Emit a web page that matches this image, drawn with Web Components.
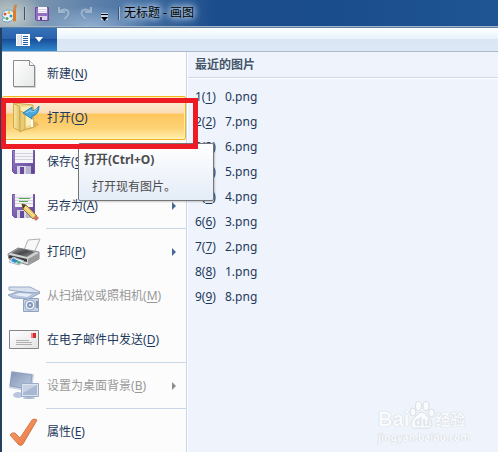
<!DOCTYPE html>
<html lang="zh-CN">
<head>
<meta charset="utf-8">
<title>无标题 - 画图</title>
<style>
	html, body {
		margin: 0;
		height: 100%;
		overflow: hidden;
	}

	body {
		font: 12px/20px "Noto Sans", "Noto Sans CJK SC", sans-serif;
		color: #1e395b;
	}
</style>
</head>
<body>
<paint-window>
	<title-bar slot="title">无标题 - 画图</title-bar>
	<ribbon-tabs slot="ribbon"></ribbon-tabs>
	<menu-item slot="menu" icon="new" key="N">新建</menu-item>
	<menu-item slot="menu" icon="open" key="O" active>打开</menu-item>
	<menu-item slot="menu" icon="save" key="S">保存</menu-item>
	<menu-item slot="menu" icon="saveas" key="A" more line>另存为</menu-item>
	<menu-item slot="menu" icon="print" key="P" more>打印</menu-item>
	<menu-item slot="menu" icon="scan" key="M" disabled>从扫描仪或照相机</menu-item>
	<menu-item slot="menu" icon="mail" key="D" line>在电子邮件中发送</menu-item>
	<menu-item slot="menu" icon="desktop" key="B" more disabled line>设置为桌面背景</menu-item>
	<menu-item slot="menu" icon="check" key="E">属性</menu-item>
	<recent-list slot="recent" files="0.png 7.png 6.png 5.png 4.png 3.png 2.png 1.png 8.png">最近的图片</recent-list>
	<menu-tip slot="over"><span slot="name">打开(Ctrl+O)</span>打开现有图片。</menu-tip>
	<red-mark slot="over"></red-mark>
	<site-mark slot="over"></site-mark>
</paint-window>

<script>
// 34x34 menu icons
const disk = `
	<linearGradient id="d" x2="1" y2="1"><stop stop-color="#9a7fc8"/><stop offset="1" stop-color="#5f3f99"/></linearGradient>
	<path d="M5.500 5.500h22v23h-20l-2-2z" fill="url(#d)" stroke="#7052a4"/>
	<path d="M8 5h18v13H8z" fill="#f5f5f8"/>
	<path d="M8 8.500h18M8 11.500h18M8 14.500h18" stroke="#d2d3dc"/>
	<path d="M10 21h14v8H10z" fill="#d5d6e2"/>
	<path d="M13 22h4v7h-4z" fill="#69499f"/><path d="M19 21h5v8h-5z" fill="#b5b5cb"/>`;

const icons = {
	new: `
		<linearGradient id="a" x2="1" y2="1"><stop stop-color="#fff"/><stop offset="1" stop-color="#e6e7e8"/></linearGradient>
		<path d="M7 4h15l7 6v21H7z" fill="#d4d4d4"/>
		<path d="M6.500 3.500h16l5 5v21h-21z" fill="url(#a)" stroke="#8c8c8c"/>
		<path d="M22.500 3.500v5h5" fill="#f7f7f7" stroke="#8c8c8c"/>`,
	open: `
		<linearGradient id="a" x2="1"><stop stop-color="#f8e9a4"/><stop offset="1" stop-color="#dfbd63"/></linearGradient>
		<path d="M12 31l15-4 5-3-3-4z" fill="#b78131" opacity=".35"/>
		<path d="M7 2l19 2 1 22-14 4z" fill="#f0d88a" stroke="#cfaa50"/>
		<path d="M14 6l11-1v18l-11 5z" fill="#fbeeb5"/>
		<path d="M6.500 2.500l6 3 1 25-7-4z" fill="url(#a)" stroke="#cdaa51"/>
		<path d="M13 10l5 2v16l-5 3z" fill="#e9cb75" stroke="#cda648"/>
		<path d="M25 19v7" stroke="#fff" stroke-width="2"/>
		<path d="M16 12l9-6v4q4 0 7-5 0 9-7 10v3z" fill="#49a8dc" stroke="#2b83b8"/>
		<path d="M19 12l5-3v2q4 0 6-3" fill="none" stroke="#8fd4f2"/>`,
	save: disk,
	saveas: disk + `
		<path d="M12 9.500h11M12 12.500h9" stroke="#55ac4d"/>
		<path d="M15 15l4 1 11 11-4 3-10-10z" fill="#efca6f" stroke="#99763f"/>
		<path d="M18 18l10 10" stroke="#fff0aa"/>
		<path d="M15 15l4 1-3 4z" fill="#443c38"/>
		<path d="M29 26l3 3-3 3-3-3z" fill="#c87565"/>`,
	print: `
		<linearGradient id="a" x2="1" y2="1"><stop stop-color="#a8a8a8"/><stop offset=".5" stop-color="#46484a"/><stop offset="1" stop-color="#999"/></linearGradient>
		<path d="M17 15l4-10 12-1-6 14z" fill="#f8f8f8" stroke="#b0b0b0"/>
		<path d="M1 19l10-6 21 4v7l-11 6-19-6z" fill="#cfd1d1" stroke="#858686"/>
		<path d="M4 18l8-5 16 4-8 5z" fill="url(#a)"/>
		<path d="M21 24l11-6v6l-11 5z" fill="#97999b"/>
		<path d="M2 20l18 4v3L2 23z" fill="#3a3c3d"/>
		<path d="M6 22l11 4-5 4-10-3z" fill="#f4faff" stroke="#aeb8c0"/>
		<path d="M6 23l6 3-4 2-4-2z" fill="#378ac4"/><path d="M12 26l3 1-3 2-3-1z" fill="#4ea982"/>`,
	scan: `
		<path d="M2 8h21l10 5-3 2L2 11z" fill="#d8e0ee" stroke="#97a9c6"/>
		<path d="M1 16l9-3 23 1-11 6-16-1z" fill="#b5c4dc" stroke="#93a7c6"/>
		<path d="M7 16l5-2 13 1-5 3z" fill="#e6edf7"/>
		<path d="M16.500 20.500h4l1-1h10v13h-15z" fill="#c5d1e3" stroke="#90a4c3"/>
		<circle cx="23" cy="26" r="5" fill="#eef2f8" stroke="#8ca0bf"/>
		<circle cx="23" cy="26" r="2" fill="none" stroke="#8296b8" stroke-width="2"/>
		<path d="M30 22v7" stroke="#8194b3" stroke-width="2"/>`,
	mail: `
		<linearGradient id="a" x2="1" y2="1"><stop stop-color="#fff"/><stop offset="1" stop-color="#e3e3e3"/></linearGradient>
		<path d="M2.500 7.500h29v18h-29z" fill="url(#a)" stroke="#858585"/>
		<path d="M24 10h5v5h-5z" fill="#cf2e32"/><path d="M24 10h2v5h-2z" fill="#ef8485"/>
		<path d="M9 17.500h13M9 19.500h16M9 21.500h16" stroke="#b0b0b0"/>`,
	desktop: `
		<linearGradient id="a" x2="1" y2="1"><stop stop-color="#8294b4"/><stop offset="1" stop-color="#c1cee2"/></linearGradient>
		<path d="M4 2l23 3-2 18-23-4z" fill="#c8d3e5"/>
		<path d="M5 3l20 3-2 14-20-3z" fill="url(#a)" stroke="#8d9ebd"/>
		<ellipse cx="11" cy="26" rx="5" ry="3" fill="#b9c6dc"/>
		<path d="M14.500 14.500h17v13h-17z" fill="#dce4f0" stroke="#9cacc8"/>
		<path d="M16 16h14v10H16z" fill="#a8b8d2"/><path d="M16 16h14L16 24z" fill="#c6d2e4"/>
		<ellipse cx="22" cy="29" rx="6" ry="1" fill="#a9b8d1"/>`,
	check: `
		<linearGradient id="a" x2="1" y2="1"><stop stop-color="#f8a86c"/><stop offset="1" stop-color="#e8703f"/></linearGradient>
		<path d="M3 20q2-3 5-2l5 5L25 5q2-2 5 0L16 29q-1 2-4 1z" fill="url(#a)" stroke="#d57850"/>`
};

// Frame of the window: title, ribbon, then the menu beside the recent files
class PaintWindow extends HTMLElement {
	constructor() {
		super();
		const shadow = this.attachShadow({ mode: 'open' });
		shadow.innerHTML = `
	<style>
	:host {
		display: flex;
		flex-direction: column;
		position: relative;
		min-height: 100%;
	}
	.client {
		flex: 1;
		display: flex;
		flex-direction: column;
		border-left: 2px solid #24405f;
	}
	.body {
		flex: 1;
		display: grid;
		grid-template-columns: 184px 1fr;
		background: #eff4fc;
	}
	nav {
		background: #fcfcfc;
		border-right: 1px solid #c8d6e6;
		margin-right: -1px;
	}
	main {
		margin-left: 1px;
		border-left: 1px solid #fff;
	}
	</style>
	<slot name="title"></slot>
	<div class="client">
		<slot name="ribbon"></slot>
		<div class="body">
			<nav><slot name="menu"></slot></nav>
			<main><slot name="recent"></slot></main>
		</div>
	</div>
	<slot name="over"></slot>`;
	}
}

class TitleBar extends HTMLElement {
	constructor() {
		super();
		const shadow = this.attachShadow({ mode: 'open' });
		shadow.innerHTML = `
	<style>
	:host {
		display: flex;
		align-items: center;
		height: 26px;
		border-bottom: 1px solid #a3b5c9;
		box-shadow: 0 1px #64819f;
		margin-bottom: 1px;
		background:
			radial-gradient(ellipse 34px 24px at 12px 16px, #c3cdcc, transparent),
			radial-gradient(ellipse 60px 20px at 90px 26px, #8fadcf, transparent),
			linear-gradient(90deg, #8fa0a8, #7390ae 50px, #5379a8 115px, #3a659b 160px, #1b4c8b 215px, #1a4d8c 330px, #1f5593);
	}
	button {
		padding: 0;
		border: 0;
		background: none;
		height: 20px;
	}
	svg { display: block; }
	i {
		width: 1px;
		height: 13px;
		background: #3b5269;
		border-right: 1px solid #b1c2d2;
	}
	.tools {
		display: flex;
		align-items: center;
		gap: 6px;
		margin: 0 9px;
	}
	h1 {
		font: inherit;
		margin: 0 0 0 4px;
		color: #000;
		text-shadow: 0 0 5px #a9c4df, 0 0 7px #a9c4df, 0 0 9px #a9c4df, 0 0 11px #a9c4df;
	}
	</style>
	<button aria-label="画图"><svg width="18" height="20" viewBox="0 0 18 20">
		<path d="M2 13Q2 7 8 7q6 0 6 5 0 6-6 7-6 0-6-3 1-1 3-1z" fill="#eaf4fa" stroke="#5fa3cb"/>
		<circle cx="5" cy="11" r="1.500" fill="#e0523e"/><circle cx="9" cy="9.500" r="1.500" fill="#e7b740"/>
		<circle cx="7" cy="15.500" r="1.500" fill="#4fa957"/><circle cx="11" cy="13" r="1.500" fill="#3d92cc"/>
		<path d="M14.500 8v9" stroke="#e07c22" stroke-width="3" stroke-linecap="round"/><path d="M13 7l1-5 3-1-1 6z" fill="#c98a4c"/>
	</svg></button>
	<i style="margin-left: 6px"></i>
	<div class="tools">
		<button aria-label="保存"><svg width="15" height="20" viewBox="0 0 15 20">
			<path d="M.5 4.500h13v13h-12l-1-1z" fill="#9270c4" stroke="#6d4a9f"/>
			<path d="M3 4h9v6H3z" fill="#f7f6fb"/><path d="M3 6.500h9M3 8.500h9" stroke="#dbd7e6"/>
			<path d="M3 13h9v4H3z" fill="#ddd6ea"/><path d="M5 14h2v3H5z" fill="#5c3a8d"/>
		</svg></button>
		<button aria-label="撤消"><svg width="16" height="20" viewBox="0 0 16 20" fill="none">
			<path d="M3 4v5h6M4 8q5-3 8 0 2 4-4 8" stroke="#6585ab" stroke-width="3" opacity=".5"/>
			<path d="M3 4v5h6M4 8q5-3 8 0 2 4-4 8" stroke="#a2b7ce" stroke-width="2"/>
		</svg></button>
		<button aria-label="重做"><svg width="16" height="20" viewBox="0 0 16 20" fill="none">
			<path d="M13 4v5H7M12 8q-5-3-8 0-2 4 4 8" stroke="#6585ab" stroke-width="3" opacity=".5"/>
			<path d="M13 4v5H7M12 8q-5-3-8 0-2 4 4 8" stroke="#9cb3cd" stroke-width="2"/>
		</svg></button>
		<button aria-label="自定义快速访问工具栏"><svg width="9" height="20" viewBox="0 0 9 20">
			<path d="M1 10h7v7H1z" fill="#c6d7e8"/>
			<path d="M1 11.500h7" stroke="#000"/><path d="M1 14h7l-3.500 4z"/>
		</svg></button>
	</div>
	<i></i>
	<h1><slot></slot></h1>`;
	}
}

class RibbonTabs extends HTMLElement {
	constructor() {
		super();
		const shadow = this.attachShadow({ mode: 'open' });
		shadow.innerHTML = `
	<style>
	:host {
		display: flex;
		height: 23px;
		background: linear-gradient(#fff, #e8f3fb 11px, #dae6f4 11px, #dce8f5);
		border-bottom: 1px solid #a9b8cb;
	}
	button {
		display: flex;
		align-items: center;
		gap: 5px;
		width: 55px;
		padding: 0 0 0 14px;
		border: 0;
		background: linear-gradient(#3672b7, #2a62ac 11px, #174d99 11px, #3288cd);
	}
	</style>
	<button aria-label="画图菜单">
		<svg width="14" height="12" viewBox="0 0 14 12">
			<path d="M0 0h14v12H0z" fill="#fff"/><path d="M1 1h4v10H1z" fill="#e3e8f0"/>
			<path d="M5.500 1v10" stroke="#b8c6da"/>
			<path d="M7 2.500h5M7 4.500h5M7 6.500h5M7 8.500h5M7 10.500h5" stroke="#2a62a6"/>
		</svg>
		<svg width="8" height="5" viewBox="0 0 8 5"><path d="M0 0h8L4 5z" fill="#fff"/></svg>
	</button>`;
	}
}

/**
 * A row of the application menu.
 * Attributes: icon, key (access key), more, line (rule below), active, disabled
 */
class MenuItem extends HTMLElement {
	constructor() {
		super();
		const shadow = this.attachShadow({ mode: 'open' });
		shadow.innerHTML = `
	<style>
	:host { display: block; }
	:host([line])::after {
		content: "";
		display: block;
		height: 1px;
		margin: 0 0 1px 44px;
		background: #c9d7e9;
	}
	button {
		box-sizing: border-box;
		display: flex;
		align-items: center;
		gap: 6px;
		width: 100%;
		height: 44px;
		padding: 0 9px 0 4px;
		border: 1px solid transparent;
		border-radius: 2px;
		background: none;
		font: inherit;
		color: inherit;
		text-align: left;
		white-space: nowrap;
	}
	button:disabled { color: #999; }
	:host([active]) button {
		border-color: #f3b51c;
		background: linear-gradient(#fdf0df, #fbdcb6 16px, #fdc65d 17px, #fdd377 32px, #fff0ae);
		box-shadow: inset 0 0 0 1px #fff0b8;
	}
	.label { flex: 1; }
	u { text-underline-offset: 2px; }
	svg { flex: none; }
	</style>
	<button>
		<svg class="icon" width="34" height="34" viewBox="0 0 34 34">${icons[this.getAttribute('icon')]}</svg>
		<span class="label"><slot></slot>(<u>${this.getAttribute('key')}</u>)</span>
	</button>`;

		const button = shadow.querySelector('button');
		button.disabled = this.hasAttribute('disabled');
		// Arrow of the submenu
		if (this.hasAttribute('more')) {
			button.innerHTML += `<svg width="4" height="8" viewBox="0 0 4 8"><path d="M0 0l4 4-4 4z" fill="${button.disabled ? '#8d8d8d' : '#486995'}"/></svg>`;
		}
	}
}

class RecentList extends HTMLElement {
	constructor() {
		super();
		const shadow = this.attachShadow({ mode: 'open' });
		shadow.innerHTML = `
	<style>
	:host { display: block; }
	h2 {
		margin: 0 0 6px;
		padding: 3px 7px 2px;
		font: inherit;
		font-weight: bold;
		color: #44546a;
		border-bottom: 1px solid #cdd9e7;
		box-shadow: 0 1px #fff;
	}
	ol {
		margin: 0;
		padding: 0;
		list-style: none;
	}
	button {
		display: flex;
		align-items: center;
		width: 100%;
		height: 25px;
		padding: 0 7px;
		border: 0;
		background: none;
		font: inherit;
		color: inherit;
	}
	.number {
		width: 30px;
		text-align: left;
	}
	u { text-underline-offset: 2px; }
	</style>
	<h2><slot></slot></h2>
	<ol></ol>`;

		const list = shadow.querySelector('ol');
		this.getAttribute('files').split(' ').forEach((file, i) => {
			const row = document.createElement('li');
			row.innerHTML = `<button><span class="number">${i + 1}(<u>${i + 1}</u>)</span><span>${file}</span></button>`;
			list.appendChild(row);
		});
	}
}

class MenuTip extends HTMLElement {
	constructor() {
		super();
		const shadow = this.attachShadow({ mode: 'open' });
		shadow.innerHTML = `
	<style>
	:host {
		box-sizing: border-box;
		position: absolute;
		left: 78px;
		top: 143px;
		width: 136px;
		padding: 6px 5px 3px;
		border: 1px solid #767676;
		border-radius: 2px;
		background: linear-gradient(#fff, #e4ecf7);
		box-shadow: 1px 1px 2px #0003;
		color: #4c4c4c;
	}
	b { display: block; }
	p { margin: 7px 0 0 8px; }
	</style>
	<b><slot name="name"></slot></b>
	<p><slot></slot></p>`;
	}
}

class RedMark extends HTMLElement {
	constructor() {
		super();
		const shadow = this.attachShadow({ mode: 'open' });
		shadow.innerHTML = `
	<style>
	:host {
		box-sizing: border-box;
		position: absolute;
		left: 1px;
		top: 98px;
		width: 197px;
		height: 51px;
		border: 5px solid #ed1c24;
		pointer-events: none;
	}
	</style>`;
	}
}

// Faint logo in the lower right corner
class SiteMark extends HTMLElement {
	constructor() {
		super();
		const shadow = this.attachShadow({ mode: 'open' });
		shadow.innerHTML = `
	<style>
	:host {
		position: absolute;
		right: 28px;
		bottom: 10px;
		color: #fafbfd;
		font-weight: bold;
		text-shadow: 0 0 1px #c9ced6, 0 0 1px #c9ced6;
	}
	.logo {
		display: flex;
		align-items: flex-end;
		font: bold 20px/22px "Liberation Sans", sans-serif;
	}
	.paw {
		display: grid;
		justify-items: center;
		align-items: end;
	}
	.paw > * { grid-area: 1 / 1; }
	.paw span {
		font-size: 13px;
		line-height: 16px;
		color: #dfe4ea;
		text-shadow: none;
	}
	.cn { font: bold 15px/22px "Noto Sans CJK SC", sans-serif; }
	small {
		display: block;
		font-size: 10px;
		line-height: 14px;
		text-align: right;
	}
	</style>
	<div class="logo">
		<span>Bai</span>
		<span class="paw">
			<svg width="26" height="30" viewBox="0 0 26 30" fill="#fafbfd" stroke="#d9dee5">
				<ellipse cx="4" cy="12" rx="3" ry="4"/><ellipse cx="9.500" cy="6" rx="3" ry="4.500"/>
				<ellipse cx="17" cy="6" rx="3" ry="4.500"/><ellipse cx="22.500" cy="13" rx="3" ry="4"/>
				<path d="M13 12q3 0 5 4 5 4 5 8-1 5-6 4H8q-6 1-6-4 0-4 5-8 3-4 6-4z"/>
			</svg>
			<span>du</span>
		</span>
		<span class="cn">经验</span>
	</div>
	<small>jingyan.baidu.com</small>`;
	}
}

customElements.define('paint-window', PaintWindow);
customElements.define('title-bar', TitleBar);
customElements.define('ribbon-tabs', RibbonTabs);
customElements.define('menu-item', MenuItem);
customElements.define('recent-list', RecentList);
customElements.define('menu-tip', MenuTip);
customElements.define('red-mark', RedMark);
customElements.define('site-mark', SiteMark);
</script>
</body>
</html>
